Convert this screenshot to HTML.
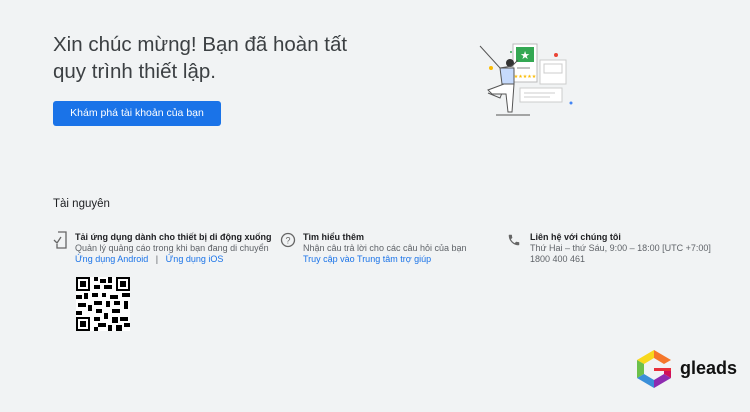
<!DOCTYPE html>
<html><head><meta charset="utf-8"><style>
*{margin:0;padding:0;box-sizing:border-box}
body{width:750px;height:412px;background:#f1f3f4;font-family:"Liberation Sans",Arial,sans-serif;color:#3c4043;position:relative;overflow:hidden}
.a{position:absolute;white-space:nowrap}
h1{position:absolute;left:53px;top:31px;font-weight:400;font-size:20.5px;line-height:27px;color:#3c4043}
.btn{position:absolute;left:53px;top:101px;width:168px;height:25px;background:#1a73e8;color:#fff;font-size:10.5px;border-radius:3px;text-align:center;line-height:25px}
.t{font-size:9px;line-height:11px}
.b{font-weight:bold;color:#202124}
.g{color:#5f6368}
.l{color:#1a73e8}
</style></head><body>
<h1>Xin chúc mừng! Bạn đã hoàn tất<br>quy trình thiết lập.</h1>
<div class="btn">Khám phá tài khoản của bạn</div>
<svg class="a" style="left:470px;top:38px" width="125" height="80" viewBox="0 0 125 80">
<rect x="43" y="6" width="24" height="38" fill="#fff" stroke="#bbb"/>
<rect x="46" y="9" width="18" height="15" fill="#34a853"/>
<text x="55" y="21" font-size="11" fill="#fff" text-anchor="middle">★</text>
<line x1="47" y1="30" x2="60" y2="30" stroke="#888"/>
<text x="55" y="40" font-size="5" fill="#fbbc04" text-anchor="middle">★★★★★</text>
<rect x="70" y="22" width="26" height="24" fill="#fff" stroke="#ccc"/>
<rect x="74" y="26" width="18" height="9" fill="none" stroke="#ccc"/>
<rect x="50" y="50" width="42" height="14" fill="#fff" stroke="#ccc"/>
<line x1="54" y1="55" x2="85" y2="55" stroke="#ccc"/><line x1="54" y1="59" x2="80" y2="59" stroke="#ccc"/>
<circle cx="40" cy="25" r="4" fill="#333"/>
<path d="M10 8 L30 30 L42 28 L48 22 M32 32 L36 45 L30 60 L18 55 M36 45 L42 60 L40 74" stroke="#555" fill="none"/>
<path d="M30 30 L44 30 L44 46 L32 46Z" fill="#c6dafc" stroke="#555"/>
<path d="M34 46 L44 46 L42 74 L38 74 L36 56 L22 56 L18 52Z" fill="#fff" stroke="#555"/>
<line x1="26" y1="77" x2="60" y2="77" stroke="#555"/>
<circle cx="21" cy="30" r="2" fill="#fbbc04"/><circle cx="86" cy="17" r="2" fill="#ea4335"/><circle cx="101" cy="65" r="1.5" fill="#4285f4"/><circle cx="41" cy="14" r="1" fill="#34a853"/>
</svg>
<div class="a" style="left:53px;top:198px;font-size:11.5px;color:#202124">Tài nguyên</div>
<svg class="a" style="left:53px;top:231px" width="16" height="18" viewBox="0 0 16 18"><path d="M5 1h8v16H4v-4" fill="none" stroke="#666" stroke-width="1.3"/><path d="M1 9l3 3 4-6" fill="none" stroke="#666" stroke-width="1.3"/></svg>
<div class="a t" style="left:75px;top:232px"><div class="b">Tải ứng dụng dành cho thiết bị di động xuống</div><div class="g">Quản lý quảng cáo trong khi bạn đang di chuyển</div><div><span class="l">Ứng dụng Android</span> &nbsp;&nbsp;<span class="g">|</span>&nbsp;&nbsp; <span class="l">Ứng dụng iOS</span></div></div>
<svg class="a" style="left:280px;top:232px" width="16" height="16" viewBox="0 0 16 16"><circle cx="8" cy="8" r="6.5" fill="none" stroke="#666" stroke-width="1.3"/><text x="8" y="11.5" font-size="9" text-anchor="middle" fill="#666" font-family="Liberation Sans">?</text></svg>
<div class="a t" style="left:303px;top:232px"><div class="b">Tìm hiểu thêm</div><div class="g">Nhận câu trả lời cho các câu hỏi của bạn</div><div class="l">Truy cập vào Trung tâm trợ giúp</div></div>
<svg class="a" style="left:507px;top:233px" width="14" height="14" viewBox="0 0 24 24"><path fill="#666" d="M6.6 10.8c1.4 2.8 3.8 5.1 6.6 6.6l2.2-2.2c.3-.3.7-.4 1-.2 1.1.4 2.300.6 3.6.6.6 0 1 .4 1 1V20c0 .6-.4 1-1 1C10.6 21 3 13.4 3 4c0-.6.4-1 1-1h3.5c.6 0 1 .4 1 1 0 1.3.2 2.5.6 3.6.1.3 0 .7-.2 1z"/></svg>
<div class="a t" style="left:530px;top:232px"><div class="b">Liên hệ với chúng tôi</div><div class="g">Thứ Hai – thứ Sáu, 9:00 – 18:00 [UTC +7:00]</div><div class="g">1800 400 461</div></div>
<svg class="a" style="left:76px;top:277px" width="54" height="54" viewBox="0 0 27 27" shape-rendering="crispEdges">
<rect width="27" height="27" fill="#fff"/>
<g fill="#000"><path d="M0 0h7v7H0zM20 0h7v7h-7zM0 20h7v7H0z"/></g>
<g fill="#fff"><path d="M1 1h5v5H1zM21 1h5v5h-5zM1 21h5v5H1z"/></g>
<g fill="#000"><path d="M2 2h3v3H2zM22 2h3v3h-3zM2 22h3v3H2z"/>
<path d="M9 0h2v2H9zM12 1h3v2h-3zM16 0h2v3h-2zM9 4h3v2H9zM14 4h4v2h-4zM8 8h3v2H8zM0 9h3v2H0zM4 8h2v3H4zM13 8h2v2h-2zM17 9h4v2h-4zM23 8h4v2h-4zM9 12h4v2H9zM15 12h2v3h-2zM19 12h3v2h-3zM24 12h2v4h-2zM1 13h4v2H1zM6 14h2v3H6zM10 16h3v2h-3zM18 16h4v2h-4zM0 17h3v2H0zM14 18h2v3h-2zM9 20h3v2H9zM18 20h3v3h-3zM22 20h4v2h-4zM11 23h4v2h-4zM16 24h2v3h-2zM20 24h3v3h-3zM24 23h3v2h-3zM9 25h2v2H9z"/></g>
</svg>
<svg class="a" style="left:634px;top:349px" width="40" height="40" viewBox="0 0 40 40">
<polygon points="20,1 37,11 30,15 20,9" fill="#f5772b"/>
<polygon points="20,1 20,9 10,15 3,11" fill="#f8d81c"/>
<polygon points="3,11 10,15 10,25 3,29" fill="#6cc04a"/>
<polygon points="3,29 10,25 20,31 20,39" fill="#3a8fd9"/>
<polygon points="20,39 20,31 30,25 37,29" fill="#8e2bb0"/>
<polygon points="37,29 30,25 30,19 37,19" fill="#d0105a"/>
<polygon points="30,19 37,19 37,22 20,22 20,19" fill="#e8303a"/>
</svg>
<div class="a" style="left:680px;top:358px;font-size:18px;font-weight:bold;color:#111">gleads</div>
</body></html>
